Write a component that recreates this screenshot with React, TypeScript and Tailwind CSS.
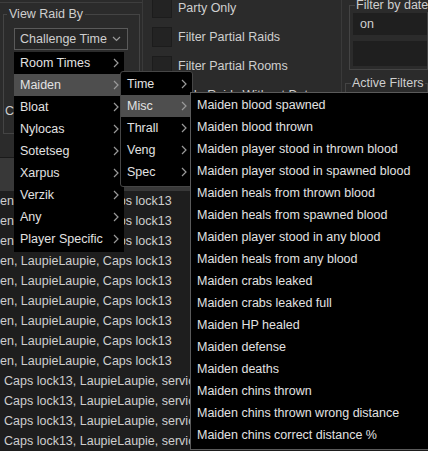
import React from 'react';

const roomMenu = ['Room Times', 'Maiden', 'Bloat', 'Nylocas', 'Sotetseg', 'Xarpus', 'Verzik', 'Any', 'Player Specific'];
const maidenMenu = ['Time', 'Misc', 'Thrall', 'Veng', 'Spec'];
const miscMenu = [
  'Maiden blood spawned',
  'Maiden blood thrown',
  'Maiden player stood in thrown blood',
  'Maiden player stood in spawned blood',
  'Maiden heals from thrown blood',
  'Maiden heals from spawned blood',
  'Maiden player stood in any blood',
  'Maiden heals from any blood',
  'Maiden crabs leaked',
  'Maiden crabs leaked full',
  'Maiden HP healed',
  'Maiden defense',
  'Maiden deaths',
  'Maiden chins thrown',
  'Maiden chins thrown wrong distance',
  'Maiden chins correct distance %',
];

const rows = [
  ...Array(9).fill('en, LaupieLaupie, Caps lock13'),
  ...Array(4).fill('Caps lock13, LaupieLaupie, serviceman'),
];

function Chevron() {
  return (
    <svg width="6" height="10" viewBox="0 0 6 10" className="shrink-0">
      <path d="M1 1l4 4-4 4" fill="none" stroke="#9a9a9a" strokeWidth="1.2" />
    </svg>
  );
}

function MenuItem({ label, active, arrow }: { label: string; active?: boolean; arrow?: boolean }) {
  return (
    <div className={`h-[22px] flex items-center justify-between pl-[6px] pr-[5px] whitespace-nowrap ${active ? 'bg-[#4e4e4e]' : ''}`}>
      <span>{label}</span>
      {arrow && <Chevron />}
    </div>
  );
}

function Checkbox({ label }: { label: string }) {
  return (
    <div className="flex items-center gap-[6px] h-[20px]">
      <div className="w-[20px] h-[20px] bg-[#232323] border border-[#1c1c1c]" />
      <span className="whitespace-nowrap">{label}</span>
    </div>
  );
}

export default function App() {
  return (
    <div className="relative w-[428px] h-[451px] overflow-hidden bg-[#2b2b2b] text-[#cfcfcf] text-[12.5px] font-['Liberation_Sans',Arial,sans-serif]">
      {/* top panel */}
      <div className="flex h-[157px]">
        <div className="w-[143px] border-r border-[#3a3a3a]">
          <div className="mt-[2px] border-t border-[#3e3e3e]" />
          <fieldset className="mt-[4px] ml-[3px] mr-[2px] h-[127px] border border-[#444444]">
            <legend className="ml-[3px] px-[2px] leading-[14px]">View Raid By</legend>
            <div className="mt-[7px] ml-[10px] w-[114px] h-[22px] border border-[#5a5a5a] bg-[#262626] flex items-center justify-between pl-[5px] pr-[6px]">
              <span>Challenge Time</span>
              <svg width="9" height="6" viewBox="0 0 9 6">
                <path d="M1 1l3.5 3.5L8 1" fill="none" stroke="#9a9a9a" strokeWidth="1.2" />
              </svg>
            </div>
            <div className="mt-[52px] pl-[1px]">Chart</div>
          </fieldset>
        </div>
        <div className="w-[199px] border-r border-[#3a3a3a] pl-[9px] flex flex-col gap-[9px] -mt-[2px]">
          <Checkbox label="Party Only" />
          <Checkbox label="Filter Partial Raids" />
          <Checkbox label="Filter Partial Rooms" />
          <Checkbox label="Hide Raids Without Data" />
        </div>
        <div className="flex-1 min-w-0 pl-[7px] overflow-hidden">
          <fieldset className="-mt-[2px] h-[72px] border border-[#444444] pl-[3px] pt-[1px] min-w-0">
            <legend className="ml-[2px] px-[1px] leading-[14px] whitespace-nowrap">Filter by date</legend>
            <div className="h-[22px] bg-[#1f1f1f] flex items-center pl-[7px]">on</div>
            <div className="mt-[6px] h-[25px] bg-[#1f1f1f]" />
          </fieldset>
          <fieldset className="mt-[6px] -ml-[4px] h-[80px] border border-[#444444] min-w-0">
            <legend className="ml-[5px] px-[1px] leading-[14px] whitespace-nowrap">Active Filters</legend>
          </fieldset>
        </div>
      </div>
      {/* table */}
      <div className="border-t border-[#1a1a1a] h-[34px] bg-[#383838]" />
      <div className="bg-[#1e1e1e]">
        {rows.map((r, i) => (
          <div key={i} className={`h-[20px] flex items-center whitespace-nowrap ${i >= 9 ? 'pl-[4px]' : ''}`}>
            {r}
          </div>
        ))}
      </div>

      {/* open dropdown menus */}
      <div className="absolute left-[14px] top-[52px] w-[110px] bg-black text-[#e2e2e2]">
        {roomMenu.map((m) => (
          <MenuItem key={m} label={m} active={m === 'Maiden'} arrow />
        ))}
        <div className="h-[2px]" />
      </div>
      <div className="absolute left-[120px] top-[71px] w-[73px] bg-black text-[#e2e2e2] border border-[#464646] rounded-[3px] pt-[1px] pb-[3px]">
        {maidenMenu.map((m) => (
          <MenuItem key={m} label={m} active={m === 'Misc'} arrow />
        ))}
      </div>
      <div className="absolute left-[190px] top-[92px] right-0 h-[358px] bg-black text-[#e2e2e2] border-t border-l border-b border-[#5a5a5a] pt-[1px]">
        {miscMenu.map((m) => (
          <MenuItem key={m} label={m} />
        ))}
      </div>
    </div>
  );
}
